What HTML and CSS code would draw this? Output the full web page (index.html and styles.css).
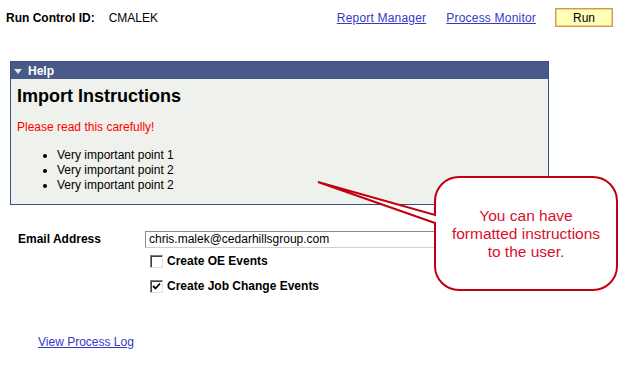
FILE: index.html
```html
<!DOCTYPE html>
<html>
<head>
    <meta charset="UTF-8">
    <title>Import - Run Control</title>
    <link rel="stylesheet" href="styles.css">
</head>
<body>
    <div class="topbar">
        <span class="label">Run Control ID:</span>
        <span class="run-id">CMALEK</span>
        <div class="top-links">
            <a href="#" class="link">Report Manager</a>
            <a href="#" class="link">Process Monitor</a>
            <button class="run-btn">Run</button>
        </div>
    </div>

    <div class="help">
        <div class="help-header">
            <span class="arrow"></span>
            <span>Help</span>
        </div>
        <div class="help-body">
            <h1>Import Instructions</h1>
            <p class="warning">Please read this carefully!</p>
            <ul>
                <li>Very important point 1</li>
                <li>Very important point 2</li>
                <li>Very important point 2</li>
            </ul>
        </div>
    </div>

    <div class="form">
        <span class="label email-label">Email Address</span>
        <div class="email-input">chris.malek@cedarhillsgroup.com</div>

        <div class="check-row first">
            <span class="checkbox"></span>
            <span class="label">Create OE Events</span>
        </div>
        <div class="check-row">
            <span class="checkbox checked">
                <svg width="9" height="9" viewBox="0 0 9 9"><path d="M1 4 L3.5 6.5 L8 1.5" fill="none" stroke="#000" stroke-width="1.8"/></svg>
            </span>
            <span class="label">Create Job Change Events</span>
        </div>
    </div>

    <div class="footer">
        <a href="#" class="link">View Process Log</a>
    </div>

    <div class="callout">
        <svg width="325" height="130" viewBox="0 0 325 130">
            <path d="M159,7 H293 A24,24 0 0 1 317,31 V96 A24,24 0 0 1 293,120 H159 A24,24 0 0 1 135,96 V53 L18,12 L135,45 V31 A24,24 0 0 1 159,7 Z" fill="#fff" stroke="#c00010" stroke-width="2"/>
        </svg>
        <div class="callout-text">You can have<br>formatted instructions<br>to the user.</div>
    </div>
</body>
</html>
```

FILE: styles.css
```css
body {
    font-family: "Liberation Sans", Arial, sans-serif;
    font-size: 12px;
    margin: 0;
    background-color: white;
    color: #000;
    position: relative;
    height: 383px;
    overflow: hidden;
}

.label {
    font-weight: bold;
}

.link {
    color: #3636c8;
    text-decoration: underline;
}

.topbar {
    display: flex;
    align-items: center;
    padding: 8px 12px 0 6px;
    height: 19px;
}

.run-id {
    margin-left: 14px;
}

.top-links {
    display: flex;
    align-items: center;
    gap: 20px;
    margin-left: auto;
}

.top-links .link {
    letter-spacing: 0.2px;
}

.run-btn {
    width: 58px;
    height: 19px;
    margin-left: -1px;
    padding: 0;
    font-family: inherit;
    font-size: 12px;
    background-color: #ffffb8;
    border: 1px solid #d9963c;
    box-shadow: inset 0 0 0 1px #f2cf8a;
}

.help {
    margin: 34px 0 0 10px;
    width: 537px;
    border: 1px solid #3c4e88;
    background-color: #eff1ec;
}

.help-header {
    display: flex;
    align-items: center;
    gap: 6px;
    height: 17px;
    padding-left: 3px;
    background-color: #485a8a;
    color: white;
    font-weight: bold;
}

.arrow {
    width: 0;
    height: 0;
    border-left: 4px solid transparent;
    border-right: 4px solid transparent;
    border-top: 5px solid #e8e8e0;
    margin-top: 1px;
}

.help-body {
    padding: 6px 6px 11px 6px;
}

.help-body h1 {
    margin: 0;
    font-size: 18px;
    line-height: 22px;
}

.warning {
    margin: 13px 0 0 0;
    line-height: 15px;
    color: #ff0000;
}

.help-body ul {
    margin: 13px 0 0 0;
    padding-left: 40px;
    line-height: 15px;
}

.form {
    display: grid;
    grid-template-columns: 127px auto;
    padding-left: 18px;
    margin-top: 26px;
    align-items: center;
}

.email-label {
    line-height: 17px;
}

.email-input {
    width: 324px;
    height: 15px;
    line-height: 15px;
    padding-left: 3px;
    border: 1px solid;
    border-color: #8a8a8a #d0d0d0 #d0d0d0 #8a8a8a;
}

.check-row {
    grid-column: 2;
    display: flex;
    align-items: center;
    gap: 4px;
    padding-left: 5px;
    height: 24px;
    margin-top: 1px;
}

.check-row.first {
    margin-top: 1px;
}

.checkbox {
    display: flex;
    align-items: center;
    justify-content: center;
    width: 11px;
    height: 11px;
    background: white;
    border: 1px solid;
    border-color: #808080 #e0e0e0 #e0e0e0 #808080;
    box-shadow: inset 1px 1px 0 #404040;
}

.footer {
    padding-left: 38px;
    margin-top: 37px;
}

.callout {
    position: absolute;
    left: 300px;
    top: 170px;
    width: 325px;
    height: 130px;
}

.callout svg {
    display: block;
}

.callout-text {
    position: absolute;
    left: 135px;
    top: 37px;
    width: 182px;
    text-align: center;
    font-size: 15.5px;
    line-height: 18px;
    color: #d8102c;
}
```
